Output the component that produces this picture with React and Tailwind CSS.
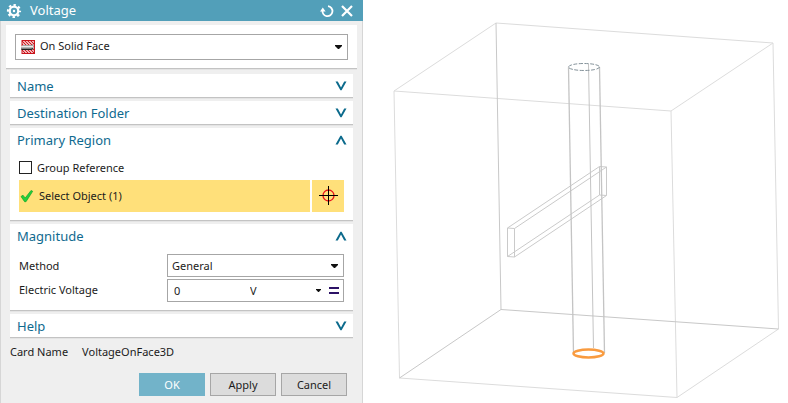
import React, { useState } from 'react';
import clsx from 'clsx';

const GearIcon = () => (
  <svg className="h-4 w-4 shrink-0" viewBox="0 0 16 16" fill="none" stroke="#fff" aria-hidden="true">
    <circle cx="8" cy="8" r="4.300" strokeWidth="2.300" />
    <circle cx="8" cy="8" r="6" strokeWidth="2.200" strokeDasharray="2.4 2.312" strokeDashoffset="1.2" />
    <circle cx="8" cy="8" r="1.2" fill="#fff" stroke="none" />
  </svg>
);

const ResetIcon = () => (
  <svg className="h-4 w-4" viewBox="0 0 16 16" fill="none" stroke="#fff" strokeWidth="1.800" aria-hidden="true">
    <path d="M9 3.2A5 5 0 1 1 3.6 7" />
    <path d="M1 8.5 3.8 4.5 6.6 8.5Z" fill="#fff" stroke="none" />
  </svg>
);

const CloseIcon = () => (
  <svg className="h-4 w-4" viewBox="0 0 16 16" fill="none" stroke="#fff" strokeWidth="2.200" aria-hidden="true">
    <path d="M3 3 13 13M13 3 3 13" />
  </svg>
);

const SolidFaceIcon = () => (
  <svg className="pointer-events-none absolute top-[5px] left-[5px] h-4 w-4" viewBox="0 0 16 16" aria-hidden="true">
    <defs>
      <pattern id="hatch" width="3" height="3" patternUnits="userSpaceOnUse">
        <rect width="3" height="3" fill="#fff" />
        <path d="M-1 -1 4 4M-1 2 1 4M2 -1 4 1" stroke="#d01018" strokeWidth="1.2" />
      </pattern>
      <linearGradient id="rod" x1="0" y1="0" x2="0" y2="1">
        <stop offset="0" stopColor="#555" />
        <stop offset=".35" stopColor="#eee" />
        <stop offset="1" stopColor="#333" />
      </linearGradient>
    </defs>
    <rect x="2" y="1.500" width="12.500" height="13" fill="url(#hatch)" stroke="#c8141c" />
    <path d="M3 6h8l2.500-.5V10L11 11H3L1 10V7.500Z" fill="url(#rod)" />
    <path d="M1.500 10.500h9.500l2-1" stroke="#222" fill="none" />
  </svg>
);

const CheckIcon = () => (
  <svg className="h-4 w-4 shrink-0" viewBox="0 0 16 16" aria-hidden="true">
    <path d="M2 8.500 4 7.200 6.200 10 12 2.500 13.700 3.300 7 13.700H5.600Z" fill="#22cf3a" stroke="#12a52a" strokeWidth=".7" />
  </svg>
);

const TargetIcon = () => (
  <svg className="h-5 w-5" viewBox="0 0 20 20" fill="none" aria-hidden="true">
    <circle cx="10.500" cy="9.500" r="5.500" stroke="#e8141c" strokeWidth="1.300" />
    <path d="M1 9.500h19M10.500 0v19" stroke="#000" />
  </svg>
);

const Caret = ({ className }) => (
  <svg className={clsx('pointer-events-none absolute', className)} viewBox="0 0 7 4" aria-hidden="true">
    <path d="M0 0h7v1L4 4H3L0 1Z" fill="#111" />
  </svg>
);

const Chevron = ({ open }) => (
  <svg className={clsx('h-3 w-3', open && 'rotate-180')} viewBox="0 0 12 12" aria-hidden="true">
    <path d="M.5 1.500H2.800L6 7.500 9.200 1.500h2.300L6.600 10.300H5.400Z" fill="#0b6a8c" />
  </svg>
);

const Section = ({ title, defaultOpen = false, children }) => {
  const [open, setOpen] = useState(defaultOpen);

  return (
    <section className="border-b border-[#c3c3c3] bg-white shadow-[0_1px_0_#e4e4e4]">
      <button
        type="button"
        aria-expanded={open}
        onClick={() => setOpen(!open)}
        className="flex h-[23px] w-full items-center justify-between pr-1.5 pl-[7px] text-[13px] text-[#0f6a8f]"
      >
        {title}
        <Chevron open={open} />
      </button>
      {open && children}
    </section>
  );
};

const DialogButton = ({ primary, children }) => (
  <button
    type="button"
    className={clsx(
      'h-[23px] w-[66px] border',
      primary ? 'border-[#72b3c9] bg-[#72b3c9] text-white' : 'border-[#a6a6a6] bg-[#dcdcdc]'
    )}
  >
    {children}
  </button>
);

// Wireframe of the air box with the rod and the cross bar inside it
const Viewport = () => (
  <svg className="w-full" viewBox="363 0 425 403" fill="none" role="img" aria-label="Model view">
    <g stroke="#dcdcdc">
      <path d="M496 23 773 43 671 111 394 91Z" />
      <path d="M394 91 399.500 378 677 397.500 671 111M773 43 778.500 329 677 397.500" />
    </g>
    <g stroke="#c8c8c8">
      <path d="M496 23 501 309.500 778.500 329M501 309.500 399.500 378" />
    </g>
    <g stroke="#cacaca">
      <path d="M507.500 228 514.500 228.500V257L507.500 256.500Z" />
      <path d="M599.500 166.500 606.500 167V195.500L599.500 195Z" />
      <path d="M507.500 228 599.500 166.500M514.500 228.500 606.500 167M514.500 257 606.500 195.500M507.500 256.500 599.500 195" />
    </g>
    <g stroke="#c4c4c4">
      <path d="M568.500 67 573.500 353" strokeWidth="1.300" />
      <path d="M599.500 67 604.500 353" strokeWidth="1.300" />
      <path d="M588.500 64 593.500 348" />
    </g>
    <ellipse cx="584" cy="67" rx="15.500" ry="3.500" stroke="#84929a" strokeDasharray="4 1.500" />
    <ellipse cx="588.500" cy="353.500" rx="15" ry="4" stroke="#f99b3f" strokeWidth="2.500" />
  </svg>
);

const App = () => {
  const [grouped, setGrouped] = useState(false);

  return (
    <div className="flex min-h-screen items-start bg-white font-['Noto_Sans','Open_Sans',sans-serif] text-[11px] leading-4 text-[#1b1b1b]">
      <form className="w-[363px] shrink-0 self-stretch bg-[#efefef]" onSubmit={(e) => e.preventDefault()}>
        <header className="flex h-[21px] items-center bg-[#529fb9] pr-2 pl-1.5 text-white">
          <GearIcon />
          <h1 className="ml-2 flex-1 pb-0.5 text-[13px] leading-5">Voltage</h1>
          <button type="button" aria-label="Reset" className="mr-1">
            <ResetIcon />
          </button>
          <button type="button" aria-label="Close">
            <CloseIcon />
          </button>
        </header>

        <div className="min-h-[calc(100vh-21px)] border-x border-[#d6d6d6] px-[5px] pt-1">
          <div className="border-b border-[#c3c3c3] bg-white px-[9px] pt-[9px] pb-2 shadow-[0_1px_0_#e4e4e4]">
            <div className="relative">
              <SolidFaceIcon />
              <select
                aria-label="Type"
                className="block h-[26px] w-full appearance-none border border-[#a6a6a6] pb-0.5 pl-6"
              >
                <option>On Solid Face</option>
              </select>
              <Caret className="top-[11px] right-1.5 h-1 w-[7px]" />
            </div>
          </div>

          <div className="mx-1 mt-[5px] flex flex-col gap-[3px]">
            <Section title="Name" />
            <Section title="Destination Folder" />

            <Section title="Primary Region" defaultOpen>
              <div className="px-[9px] pb-2">
                <label className="flex h-[29px] items-center gap-[5px] pt-1">
                  <input
                    type="checkbox"
                    checked={grouped}
                    onChange={(e) => setGrouped(e.target.checked)}
                    className="h-[13px] w-[13px] appearance-none border border-[#222] bg-white checked:bg-[#0f6a8f]"
                  />
                  Group Reference
                </label>
                <div className="flex h-8 gap-0.5">
                  <button type="button" className="flex flex-1 items-center gap-1 bg-[#ffe07a]">
                    <CheckIcon />
                    Select Object (1)
                  </button>
                  <button
                    type="button"
                    aria-label="Pick point"
                    className="flex w-8 items-center justify-center bg-[#ffe07a]"
                  >
                    <TargetIcon />
                  </button>
                </div>
              </div>
            </Section>

            <Section title="Magnitude" defaultOpen>
              <div className="grid grid-cols-[148px_1fr] items-center gap-y-0.5 px-[9px] pt-[7px] pb-2">
                <label htmlFor="method">Method</label>
                <div className="relative">
                  <select id="method" className="block h-[23px] w-full appearance-none border border-[#a6a6a6] pl-1">
                    <option>General</option>
                  </select>
                  <Caret className="top-[10px] right-1.5 h-1 w-[7px]" />
                </div>
                <label htmlFor="voltage" className="pb-0.5">Electric Voltage</label>
                <div className="flex h-[23px] items-center border border-[#a6a6a6]">
                  <input id="voltage" defaultValue="0" className="w-[78px] pl-1.5" />
                  <div className="relative flex-1">
                    <select aria-label="Unit" className="block w-full appearance-none pl-1">
                      <option>V</option>
                    </select>
                    <Caret className="top-1.5 right-1 h-[3px] w-[5px]" />
                  </div>
                  <button type="button" aria-label="Formula" className="px-1">
                    <svg className="h-2 w-[10px]" viewBox="0 0 10 8" aria-hidden="true">
                      <path d="M0 0h10v2H0ZM0 5h10v2H0Z" fill="#2c1266" />
                    </svg>
                  </button>
                </div>
              </div>
            </Section>

            <Section title="Help" />
          </div>

          <p className="mt-1.5 ml-1 flex gap-3.5">
            <span>Card Name</span>
            <span>VoltageOnFace3D</span>
          </p>

          <div className="mt-[13px] mr-[10px] flex justify-end gap-[5px]">
            <DialogButton primary>OK</DialogButton>
            <DialogButton>Apply</DialogButton>
            <DialogButton>Cancel</DialogButton>
          </div>
        </div>
      </form>

      <main className="min-w-0 flex-1">
        <Viewport />
      </main>
    </div>
  );
};

export default App;
